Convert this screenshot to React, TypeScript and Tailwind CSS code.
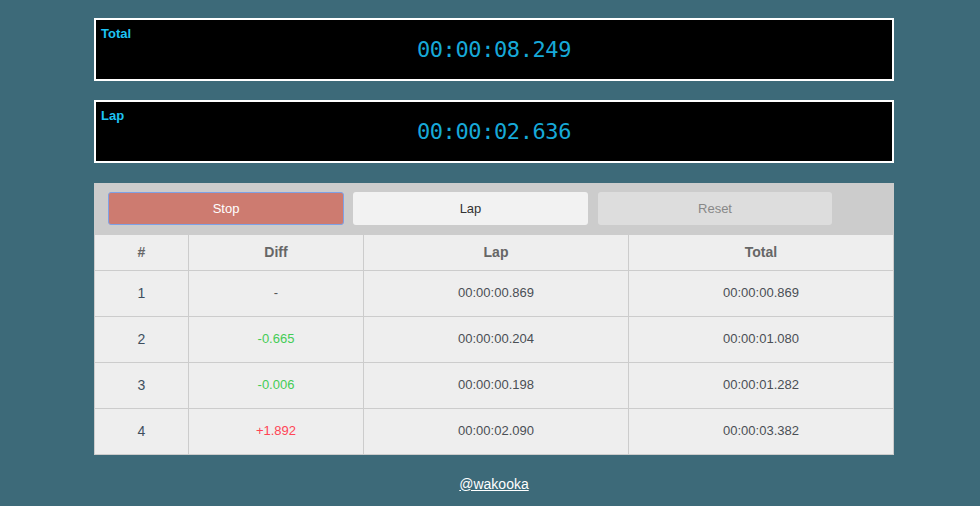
import React from 'react';

type LapRow = { n: number; diff: string; trend: 'none' | 'down' | 'up'; lap: string; total: string };

const laps: LapRow[] = [
  { n: 1, diff: '-', trend: 'none', lap: '00:00:00.869', total: '00:00:00.869' },
  { n: 2, diff: '-0.665', trend: 'down', lap: '00:00:00.204', total: '00:00:01.080' },
  { n: 3, diff: '-0.006', trend: 'down', lap: '00:00:00.198', total: '00:00:01.282' },
  { n: 4, diff: '+1.892', trend: 'up', lap: '00:00:02.090', total: '00:00:03.382' },
];

const Display: React.FC<{ label: string; time: string }> = ({ label, time }) => (
  <div className="relative h-[63px] border-2 border-white bg-black flex items-center justify-center">
    <span className="absolute left-[5px] top-[6px] text-[13px] leading-[15px] font-bold text-[#1ec3f3]">{label}</span>
    <span className="mt-[1px] text-[22px] leading-none tracking-[-0.4px] text-[#17a9d8] font-['DejaVu_Sans_Mono',monospace]">
      {time}
    </span>
  </div>
);

const App: React.FC = () => {
  return (
    <div className="min-h-[506px] bg-[#3d6a79] pt-[18px] font-['Liberation_Sans',Arial,sans-serif]">
      <div className="w-[800px] ml-[94px]">
        <Display label="Total" time="00:00:08.249" />
        <div className="h-[19px]" />
        <Display label="Lap" time="00:00:02.636" />

        {/* Controls */}
        <div className="mt-[20px] bg-[#cccccc] pl-[14px] pt-[9px] pb-[10px] flex gap-[9px]">
          <button className="w-[236px] h-[33px] rounded-[3px] bg-[#cd7b70] border border-[#7ea1e6] text-white text-[13px]">
            Stop
          </button>
          <button className="w-[235px] h-[33px] rounded-[3px] bg-[#f2f2f2] text-[#333] text-[13px]">
            Lap
          </button>
          <button className="ml-[1px] w-[234px] h-[33px] rounded-[3px] bg-[#dddddd] text-[#888] text-[13px]">
            Reset
          </button>
        </div>

        {/* Laps */}
        <table className="w-full border-collapse bg-[#eeeeee] text-[13px]">
          <thead>
            <tr className="h-[35px] text-[#666] font-bold text-[14px]">
              <th className="w-[94px] border border-[#cccccc] border-t-0">#</th>
              <th className="w-[175px] border border-[#cccccc] border-t-0">Diff</th>
              <th className="w-[265px] border border-[#cccccc] border-t-0">Lap</th>
              <th className="border border-[#cccccc] border-t-0">Total</th>
            </tr>
          </thead>
          <tbody>
            {laps.map(row => (
              <tr key={row.n} className="h-[46px] text-center text-[#4a4f55]">
                <td className="border border-[#cccccc] text-[#3e4e5e] text-[14px]">{row.n}</td>
                <td
                  className={`border border-[#cccccc] ${
                    row.trend === 'down' ? 'text-[#44cc55]' : row.trend === 'up' ? 'text-[#ff4455]' : 'text-[#555]'
                  }`}
                >
                  {row.diff}
                </td>
                <td className="border border-[#cccccc]">{row.lap}</td>
                <td className="border border-[#cccccc]">{row.total}</td>
              </tr>
            ))}
          </tbody>
        </table>

        <div className="pt-[17px] text-center">
          <a href="#" className="text-[14px] text-white underline">@wakooka</a>
        </div>
      </div>
    </div>
  );
};

export default App;
